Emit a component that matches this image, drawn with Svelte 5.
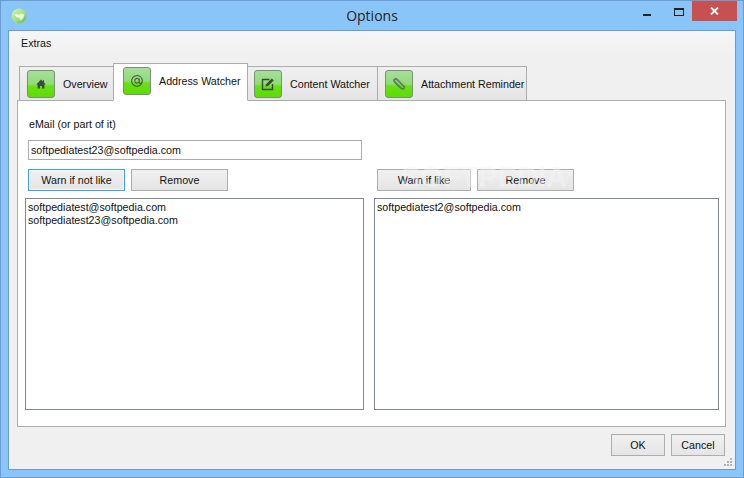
<script>
  const leftList = ['softpediatest@softpedia.com', 'softpediatest23@softpedia.com'];
  const rightList = ['softpediatest2@softpedia.com'];
  const tabs = [
    { label: 'Overview', icon: 'home', w: 'w1' },
    { label: 'Address Watcher', icon: 'at', w: 'w2', active: true },
    { label: 'Content Watcher', icon: 'edit', w: 'w3' },
    { label: 'Attachment Reminder', icon: 'clip', w: 'w4' }
  ];
</script>

<div class="window">
  <header class="titlebar">
    <svg class="appicon" width="16" height="16" viewBox="0 0 16 16">
      <defs>
        <linearGradient id="ag" x1="0" y1="0" x2="1" y2="1">
          <stop offset="0" stop-color="#d4f2bc" />
          <stop offset="0.55" stop-color="#a4e07c" />
          <stop offset="1" stop-color="#58b838" />
        </linearGradient>
      </defs>
      <circle cx="8" cy="8" r="7.5" fill="url(#ag)" />
      <path d="M3 6.5l3-.5 2 1 2-1.5 3.5 1-1.5 4-2.5 2-1-2.5-3-1z" fill="#eef8e6" />
    </svg>
    <span class="title">Options</span>
    <div class="controls">
      <span class="min"></span>
      <span class="max"></span>
      <span class="close">
        <svg width="9" height="8" viewBox="0 0 9 8"><path d="M1 0.5l7 7M8 0.5l-7 7" stroke="#fff" stroke-width="1.8" /></svg>
      </span>
    </div>
  </header>

  <div class="client">
    <div class="menu"><span>Extras</span></div>

    <div class="tabs">
      {#each tabs as t}
        <div class="tab {t.w}" class:active={t.active}>
          <span class="badge">
            <svg width="14" height="14" viewBox="0 0 14 14">
              {#if t.icon === 'home'}
                <path d="M7 2.5L2.3 7.5H3.6V11.5H6V9H8V11.5H10.4V7.5H11.7L10 5.6V3.2H8.8V4.4Z" fill="#3e4a38" />
              {:else if t.icon === 'at'}
                <path d="M11.6 9.8A5.4 5.4 0 1 1 12.4 6.6Q12.4 9.4 10.4 9.4 9.2 9.4 9.2 8V4.6M9.2 6.8A2.2 2.4 0 1 1 9.2 6.7" fill="none" stroke="#4a5a40" stroke-width="1.1" />
              {:else if t.icon === 'edit'}
                <path d="M8.5 2.5H1.5V12.5H11.5V7" fill="none" stroke="#3a4a32" stroke-width="1.4" />
                <path d="M4.5 9.5L5 7.2 10.8 1.5 12.8 3.5 7 9Z" fill="#3a4a32" />
              {:else}
                <path d="M2.5 4.5L9.5 11.5Q11 12.5 12 11.3T11.5 9L5 2.5Q3.8 1.5 2.6 2.5T2.8 5.2L8.5 10.8" fill="none" stroke="#5f7a58" stroke-width="1.7" />
              {/if}
            </svg>
          </span>
          <span class="tablabel">{t.label}</span>
        </div>
      {/each}
    </div>

    <section class="panel">
      <label class="caption" for="mail">eMail (or part of it)</label>
      <input id="mail" class="input" value="softpediatest23@softpedia.com" readonly />

      <div class="columns">
        <div class="col left">
          <div class="actions">
            <button class="btn focus w97">Warn if not like</button>
            <button class="btn w97">Remove</button>
          </div>
          <div class="list">
            {#each leftList as item}<div>{item}</div>{/each}
          </div>
        </div>
        <div class="col right">
          <div class="actions">
            <button class="btn w94">Warn if like</button>
            <button class="btn w97">Remove</button>
          </div>
          <div class="list">
            {#each rightList as item}<div>{item}</div>{/each}
          </div>
        </div>
      </div>
      <span class="watermark">SOFTPEDIA</span>
    </section>

    <footer class="footer">
      <button class="btn w54">OK</button>
      <button class="btn w54">Cancel</button>
      <svg class="grip" width="8" height="8" viewBox="0 0 8 8" fill="#b4b4b4">
        <rect x="6" y="0" width="2" height="2" /><rect x="3" y="3" width="2" height="2" /><rect x="6" y="3" width="2" height="2" />
        <rect x="0" y="6" width="2" height="2" /><rect x="3" y="6" width="2" height="2" /><rect x="6" y="6" width="2" height="2" />
      </svg>
    </footer>
  </div>
</div>

<style>
  :global(body) { margin: 0; }
  .window {
    box-sizing: border-box;
    width: 744px;
    height: 478px;
    background: #8ac5f9;
    border: 1px solid #6c9ccf;
    display: flex;
    flex-direction: column;
    font-family: "Liberation Sans", Arial, sans-serif;
    font-size: 10.7px;
    color: #111;
    overflow: hidden;
  }
  .titlebar {
    height: 29px;
    flex: none;
    display: flex;
    align-items: center;
    justify-content: center;
    position: relative;
  }
  .appicon { position: absolute; left: 10px; top: 7px; }
  .title { font-size: 14px; color: #222; font-family: "Open Sans", sans-serif; }
  .controls { position: absolute; right: 6px; top: 0; display: flex; align-items: flex-start; }
  .min { width: 8px; height: 2px; background: #222; margin: 13px 23px 0 0; }
  .max { box-sizing: border-box; width: 10px; height: 8px; border: 1px solid #222; border-top-width: 2px; margin: 7px 8px 0 0; }
  .close { width: 45px; height: 20px; background: #c75050; display: flex; align-items: center; justify-content: center; }

  .client {
    flex: 1;
    margin: 0 7px 7px 7px;
    background: #f0f0f0;
    border: 1px solid #6c9ccf;
    display: flex;
    flex-direction: column;
    min-height: 0;
  }
  .menu { height: 24px; flex: none; display: flex; align-items: center; padding-left: 12px; background: linear-gradient(#f6f6f6, #f0f0f0); }

  .tabs { display: flex; align-items: flex-end; height: 46px; flex: none; padding-left: 11px; position: relative; z-index: 1; margin-bottom: -1px; }
  .tab {
    box-sizing: border-box;
    height: 35px;
    display: flex;
    align-items: center;
    border: 1px solid #acacac;
    margin-left: -1px;
    background: linear-gradient(#f0f0f0, #e5e5e5);
  }
  .tab.active {
    height: 38px;
    background: #fff;
    border-bottom-color: #fff;
    z-index: 2;
    padding-bottom: 3px;
  }
  .w1 { width: 95px; padding-left: 7px; }
  .w2 { width: 135px; padding-left: 9px; }
  .w3 { width: 131px; padding-left: 6px; }
  .w4 { width: 150px; padding-left: 7px; }
  .badge {
    box-sizing: border-box;
    width: 28px;
    height: 28px;
    border: 1px solid #7a8f76;
    border-radius: 3px;
    background: linear-gradient(#a9de9c 0%, #8fdc78 50%, #68e014 58%, #5cdc04 100%);
    display: flex;
    align-items: center;
    justify-content: center;
    flex: none;
  }
  .tablabel { margin-left: 8px; white-space: nowrap; }

  .panel {
    box-sizing: border-box;
    margin: 0 9px 0 8px;
    height: 327px;
    flex: none;
    background: #fff;
    border: 1px solid #acacac;
    padding: 16px 5px 16px 7px;
    display: flex;
    flex-direction: column;
    position: relative;
  }
  .caption { margin-left: 4px; height: 14px; line-height: 14px; }
  .input {
    box-sizing: border-box;
    width: 334px;
    height: 20px;
    margin: 9px 0 0 3px;
    padding: 0 2px;
    border: 1px solid #acacac;
    font: inherit;
    color: #111;
    outline: none;
  }
  .columns { display: flex; gap: 10px; margin-top: 9px; flex: 1; min-height: 0; }
  .col { display: flex; flex-direction: column; flex: none; }
  .col.left { width: 339px; }
  .col.right { width: 345px; }
  .actions { display: flex; gap: 6px; padding-left: 3px; height: 22px; flex: none; margin-bottom: 7px; }
  .btn {
    box-sizing: border-box;
    height: 22px;
    padding: 0;
    border: 1px solid #adadad;
    background: linear-gradient(#f0f0f0, #e5e5e5);
    font: inherit;
    color: #111;
  }
  .btn.focus { border-color: #3c9ef0; box-shadow: inset 0 0 0 1px #f2f8fd; }
  .w97 { width: 97px; }
  .w94 { width: 94px; }
  .w54 { width: 54px; height: 22px; }
  .list {
    box-sizing: border-box;
    flex: 1;
    border: 1px solid #828790;
    padding: 2px 2px;
    line-height: 13px;
    background: #fff;
  }
  .watermark {
    position: absolute;
    left: 383px;
    top: 60px;
    font: bold 29px "Liberation Sans", sans-serif;
    color: rgba(245, 245, 245, 0.45);
    pointer-events: none;
  }
  .footer { flex: 1; position: relative; display: flex; justify-content: flex-end; align-items: flex-start; gap: 6px; padding: 7px 10px 0 0; }
  .grip { position: absolute; right: 3px; bottom: 3px; }
</style>
